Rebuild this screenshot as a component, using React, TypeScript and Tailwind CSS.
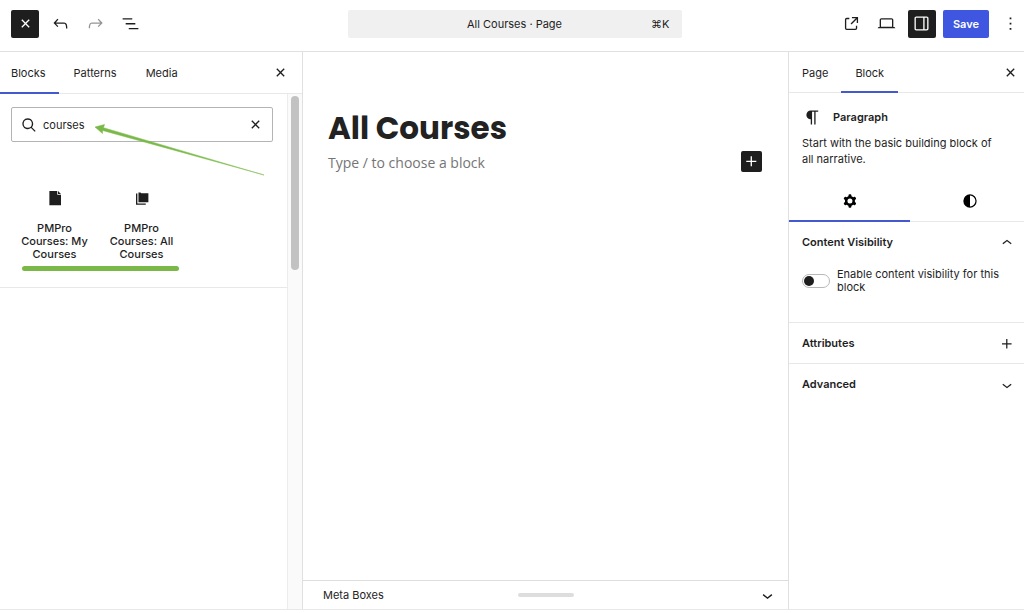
import { useState } from "react";
import type { ReactNode } from "react";

const paths = {
  close:
    "M12 13.06l3.712 3.713 1.061-1.06L13.061 12l3.712-3.712-1.06-1.06L12 10.938 8.288 7.227l-1.061 1.06L10.939 12l-3.712 3.712 1.06 1.061L12 13.061z",
  undo: "M18.3 11.7c-.6-.6-1.4-.9-2.3-.9H6.7l2.9-3.3-1.1-1-4.5 5L8.5 16l1-1-2.7-2.7H16c.5 0 .9.2 1.3.5 1 1 1 3.4 1 4.5v.3h1.5v-.2c0-1.5 0-4.3-1.5-5.7z",
  redo: "M15.6 6.5l-1.1 1 2.9 3.3H8c-.9 0-1.7.3-2.3.9-1.4 1.5-1.4 4.2-1.4 5.6v.2h1.5v-.3c0-1.1 0-3.5 1-4.5.3-.3.7-.5 1.3-.5h9.2L14.5 15l1.1 1.1 4.6-4.6-4.6-5z",
  listView: "M3 6h11v1.5H3V6Zm3.5 5.5h11V13h-11v-1.5ZM21 17H10v1.5h11V17Z",
  external:
    "M19.5 4.5h-7V6h4.44l-5.97 5.97 1.06 1.06L18 7.06v4.44h1.5v-7Zm-13 1a2 2 0 0 0-2 2v10a2 2 0 0 0 2 2h10a2 2 0 0 0 2-2v-3H17v3a.5.5 0 0 1-.5.5h-10a.5.5 0 0 1-.5-.5v-10a.5.5 0 0 1 .5-.5h3V5.5h-3Z",
  desktop:
    "M20.5 16h-.7V8c0-1.1-.9-2-2-2H6.2c-1.1 0-2 .9-2 2v8h-.7c-.8 0-1.5.7-1.5 1.5h20c0-.8-.7-1.5-1.5-1.5zM5.7 8c0-.3.2-.5.5-.5h11.6c.3 0 .5.2.5.5v7.6H5.7V8z",
  drawer:
    "M18 4H6c-1.1 0-2 .9-2 2v12c0 1.1.9 2 2 2h12c1.1 0 2-.9 2-2V6c0-1.1-.9-2-2-2zm-4 14.5H6c-.3 0-.5-.2-.5-.5V6c0-.3.2-.5.5-.5h8v13zm4.5-.5c0 .3-.2.5-.5.5h-2.5v-13H18c.3 0 .5.2.5.5v12z",
  more: "M13 19h-2v-2h2v2zm0-6h-2v-2h2v2zm0-6h-2V5h2v2z",
  search:
    "M10.500 4a6.500 6.500 0 1 0 3.900 11.700l4.500 4.500 1.100-1.100-4.500-4.500A6.500 6.500 0 0 0 10.500 4zm0 1.600a4.900 4.900 0 1 1 0 9.800 4.900 4.900 0 0 1 0-9.800z",
  paragraph:
    "m9.996 14v-.225l.004 0v6.225h1.500v-14.500h2.500v14.500h1.500v-14.500h3v-1.500h-8.504c-2.761 0-5 2.239-5 5 0 2.761 2.239 5 5 5z",
  chevronUp: "M6.500 12.400L12 8l5.500 4.400-.9 1.200L12 10l-4.500 3.600-1-1.200z",
  chevronDown: "M17.500 11.600L12 16l-5.500-4.400.9-1.200L12 14l4.500-3.600 1 1.200z",
  plus: "M11 12.500V17.500H12.500V12.500H17.500V11H12.500V6H11V11H6V12.500H11Z",
  styles:
    "M20 12a8 8 0 1 1-16 0 8 8 0 0 1 16 0Zm-1.500 0a6.500 6.500 0 0 1-6.500 6.500v-13a6.500 6.500 0 0 1 6.500 6.500Z",
  cog: "M10.289 4.836A1 1 0 0111.275 4h1.306a1 1 0 01.987.836l.244 1.466c.787.26 1.503.679 2.108 1.218l1.393-.522a1 1 0 011.216.437l.653 1.130a1 1 0 01-.23 1.273l-1.148.944a6.025 6.025 0 010 2.435l1.149.946a1 1 0 01.23 1.272l-.653 1.130a1 1 0 01-1.216.437l-1.394-.522c-.605.54-1.320.958-2.108 1.218l-.244 1.466a1 1 0 01-.987.836h-1.306a1 1 0 01-.986-.836l-.244-1.466a5.995 5.995 0 01-2.108-1.218l-1.394.522a1 1 0 01-1.217-.436l-.653-1.131a1 1 0 01.23-1.272l1.149-.946a6.026 6.026 0 010-2.435l-1.148-.944a1 1 0 01-.23-1.272l.653-1.131a1 1 0 011.217-.437l1.393.522a5.994 5.994 0 012.108-1.218l.244-1.466zM14.929 12a3 3 0 11-6 0 3 3 0 016 0z",
  page: "M4.500 2.500H15V7.500H20V21.500H4.500zM16 2.500L20 6.500H16z",
  pages: "M4 6h1.800v13.200H17V21H4zM7.300 4.500H10l1 1.300H20.500V17.800H7.300z",
};

type IconName = keyof typeof paths;

const Icon = ({
  name,
  className = "size-5",
}: {
  name: IconName;
  className?: string;
}) => (
  <svg
    viewBox="0 0 24 24"
    fill="currentColor"
    fillRule="evenodd"
    className={`shrink-0 ${className}`}
    aria-hidden="true"
  >
    <path d={paths[name]} />
  </svg>
);

const IconButton = ({
  name,
  label,
  className = "",
}: {
  name: IconName;
  label: string;
  className?: string;
}) => (
  <button
    type="button"
    aria-label={label}
    className={`flex size-7 shrink-0 items-center justify-center rounded-xs ${className}`}
  >
    <Icon name={name} className="size-[21px]" />
  </button>
);

const Tab = ({
  active = false,
  label,
  className = "",
  children,
}: {
  active?: boolean;
  label?: string;
  className?: string;
  children: ReactNode;
}) => (
  <button
    type="button"
    role="tab"
    aria-selected={active}
    aria-label={label}
    className={`-mb-px flex items-center border-b-2 ${
      active ? "border-[#4559cf]" : "border-transparent"
    } ${className}`}
  >
    {children}
  </button>
);

const Header = () => (
  <header className="flex h-[52px] shrink-0 items-center justify-between border-b border-[#e0e0e0] pb-1 pl-[5px]">
    <div className="flex flex-1 items-center gap-[7px]">
      <IconButton
        name="close"
        label="Close editor"
        className="ml-[6px] bg-[#1e1e1e] text-white"
      />
      <IconButton name="undo" label="Undo" />
      <IconButton name="redo" label="Redo" className="text-[#949494]" />
      <IconButton name="listView" label="Document overview" />
    </div>
    <button
      type="button"
      className="grid h-7 w-1/3 max-w-[334px] grid-cols-[1fr_auto_1fr] items-center rounded-xs bg-[#f0f0f0] px-3 pt-px"
    >
      <span className="col-start-2">All Courses · Page</span>
      <span className="text-right">⌘K</span>
    </button>
    <div className="flex flex-1 items-center justify-end gap-[7px]">
      <IconButton name="external" label="View page" />
      <IconButton name="desktop" label="Preview" />
      <IconButton
        name="drawer"
        label="Settings"
        className="bg-[#1e1e1e] text-white"
      />
      <button
        type="button"
        className="h-7 rounded-xs bg-[#3e56e0] px-[10px] pt-px font-semibold text-white"
      >
        Save
      </button>
      <IconButton name="more" label="Options" />
    </div>
  </header>
);

const BlockItem = ({ icon, title }: { icon: IconName; title: string }) => (
  <li className="w-[87px]">
    <button
      type="button"
      className="flex w-full flex-col items-center gap-[15px] px-2 leading-[13px] font-medium"
    >
      <Icon name={icon} className="size-[18px]" />
      <span>{title}</span>
    </button>
  </li>
);

const Inserter = () => {
  const [query, setQuery] = useState("courses");

  return (
    <aside className="flex w-[303px] shrink-0 flex-col border-r border-[#e0e0e0]">
      <div className="flex h-[42px] shrink-0 justify-between border-b border-[#e8e8e8] pr-2">
        <div role="tablist" className="flex">
          <Tab active className="pt-[2px] pr-[13px] pl-[11px]">
            Blocks
          </Tab>
          <Tab className="px-[15px] pt-[2px]">Patterns</Tab>
          <Tab className="px-[14px] pt-[2px]">Media</Tab>
        </div>
        <IconButton name="close" label="Close inserter" className="mt-[6px]" />
      </div>
      <div className="flex grow">
        <div className="grow">
          <div className="relative border-b border-[#e8e8e8] px-[11px] pt-[13px] pb-4">
            <div className="mr-[3px] flex h-[35px] items-center rounded-xs border border-[#b4b4b4] pr-[3px] pl-[7px]">
              <Icon name="search" />
              <input
                type="text"
                aria-label="Search"
                value={query}
                onChange={(e) => setQuery(e.target.value)}
                className="min-w-0 grow px-1 pt-px outline-none"
              />
              <IconButton name="close" label="Reset search" />
            </div>
            <ul className="mt-[47px] flex">
              <BlockItem icon="page" title="PMPro Courses: My Courses" />
              <BlockItem icon="pages" title="PMPro Courses: All Courses" />
            </ul>
            <div className="mt-[5px] ml-[11px] h-[5px] w-[157px] rounded-full bg-[#7ab948]" />
            {/* Arrow pointing at the search term */}
            <svg
              viewBox="0 0 170 52"
              className="pointer-events-none absolute top-[30px] left-[95px] h-[52px] w-[170px]"
              aria-hidden="true"
            >
              <path
                d="M0 3L9.500 .5L8.500 3.700L169 51L7.500 6.500L7.500 9.500Z"
                fill="#7ab948"
                stroke="#7ab948"
                strokeWidth=".5"
              />
            </svg>
          </div>
        </div>
        <div className="w-[15px] shrink-0 border-l border-[#ececec] bg-[#fafafa] pt-[2px]">
          <div className="mx-auto h-[174px] w-2 rounded-full bg-[#c2c2c2]" />
        </div>
      </div>
    </aside>
  );
};

const Canvas = () => (
  <main className="flex min-w-0 grow flex-col">
    <div className="grow pt-[54px] pr-[26px] pl-[25px]">
      <h1 className="font-['Poppins','Inter',sans-serif] text-[31px] leading-[44px] font-bold text-[#222]">
        All Courses
      </h1>
      <div className="flex items-center justify-between">
        <p className="pt-[3px] font-['Open_Sans',sans-serif] text-sm text-[#757575]">
          Type / to choose a block
        </p>
        <IconButton
          name="plus"
          label="Add block"
          className="size-[21px]! bg-[#1e1e1e] text-white"
        />
      </div>
    </div>
    <div className="grid h-[29px] shrink-0 grid-cols-[1fr_auto_1fr] items-center border-t border-[#ddd] px-[11px]">
      <h2 className="pl-[9px]">Meta Boxes</h2>
      <div className="h-1 w-14 rounded-full bg-[#ddd]" />
      <IconButton
        name="chevronDown"
        label="Toggle meta boxes"
        className="size-5! justify-self-end"
      />
    </div>
  </main>
);

const PanelHeader = ({ title, icon }: { title: string; icon: IconName }) => (
  <h3>
    <button
      type="button"
      className="flex h-10 w-full items-center justify-between pt-px pr-[7px] pl-[13px] font-semibold"
    >
      {title}
      <Icon name={icon} />
    </button>
  </h3>
);

const Settings = () => {
  const [enabled, setEnabled] = useState(false);

  return (
    <aside className="w-[236px] shrink-0 border-l border-[#e0e0e0]">
      <div className="flex h-[41px] justify-between border-b border-[#e8e8e8]">
        <div role="tablist" className="flex">
          <Tab className="px-[13px] pt-[3px]">Page</Tab>
          <Tab active className="px-[14px] pt-[3px]">
            Block
          </Tab>
        </div>
        <IconButton name="close" label="Close settings" className="mt-[6px]" />
      </div>
      <div className="pt-[14px] pr-6 pl-[13px]">
        <div className="flex items-center gap-[10px]">
          <Icon name="paragraph" className="size-[21px]" />
          <h2 className="font-semibold">Paragraph</h2>
        </div>
        <p className="mt-[7px] leading-4">
          Start with the basic building block of all narrative.
        </p>
      </div>
      <div
        role="tablist"
        className="mt-[14px] flex h-[41px] border-b border-[#e8e8e8] text-black"
      >
        <Tab active label="Settings" className="w-[121px] justify-center">
          <Icon name="cog" />
        </Tab>
        <Tab label="Styles" className="grow justify-center pl-[6px]">
          <Icon name="styles" />
        </Tab>
      </div>
      <section className="border-b border-[#e8e8e8] pb-7">
        <PanelHeader title="Content Visibility" icon="chevronUp" />
        <div className="mt-[6px] flex items-center gap-[7px] px-[13px]">
          <input
            id="content-visibility"
            type="checkbox"
            role="switch"
            checked={enabled}
            onChange={(e) => setEnabled(e.target.checked)}
            className="flex h-[14px] w-7 shrink-0 appearance-none items-center rounded-full border border-[#b8b8b8] before:ml-px before:size-[10px] before:rounded-full before:bg-[#1e1e1e] checked:bg-[#3e56e0] checked:before:ml-[15px] checked:before:bg-white"
          />
          <label htmlFor="content-visibility" className="leading-[13px]">
            Enable content visibility for this block
          </label>
        </div>
      </section>
      <section className="border-b border-[#e8e8e8]">
        <PanelHeader title="Attributes" icon="plus" />
      </section>
      <section>
        <PanelHeader title="Advanced" icon="chevronDown" />
      </section>
    </aside>
  );
};

const App = () => {
  return (
    <div className="flex min-h-screen flex-col bg-white pb-[3px] font-['Inter',sans-serif] text-[11px] text-[#1e1e1e]">
      <Header />
      <div className="flex grow border-b border-[#e8e8e8]">
        <Inserter />
        <Canvas />
        <Settings />
      </div>
    </div>
  );
};

export default App;
